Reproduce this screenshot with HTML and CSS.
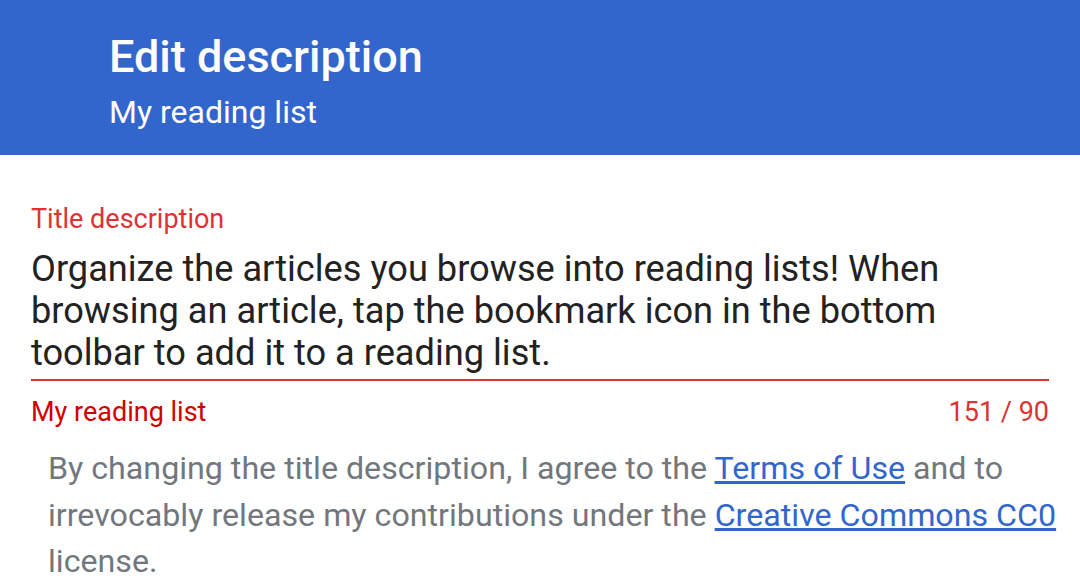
FILE: index.html
```html
<!DOCTYPE html>
<html>
<head>
<meta charset="utf-8">
<link rel="stylesheet" href="styles.css">
</head>
<body>
<header class="appbar">
  <h1 class="appbar-title">Edit description</h1>
  <div class="appbar-subtitle">My reading list</div>
</header>
<main class="content">
  <div class="field">
    <label class="field-label">Title description</label>
    <div class="field-input">Organize the articles you browse into reading lists! When browsing an article, tap the bookmark icon in the bottom toolbar to add it to a reading list.</div>
    <div class="field-helper">
      <span class="helper-error">My reading list</span>
      <span class="helper-count">151 / 90</span>
    </div>
  </div>
  <p class="legal">By changing the title description, I agree to the <a href="#">Terms of Use</a> and to irrevocably release my contributions under the <a href="#">Creative Commons CC0</a> license.</p>
</main>
</body>
</html>
```
FILE: styles.css
```css
html, body {
  margin: 0;
  padding: 0;
  background: #ffffff;
  font-family: Roboto, "Noto Sans", sans-serif;
}
.appbar {
  background: #3366cc;
  height: 155px;
  box-sizing: border-box;
  padding: 30px 0 0 109px;
  color: #ffffff;
}
.appbar-title {
  margin: 0;
  font-size: 45px;
  font-weight: 500;
  line-height: 54px;
}
.appbar-subtitle {
  font-size: 32px;
  line-height: 40px;
  margin-top: 8px;
}
.content {
  padding: 47px 31px 0;
}
.field-label {
  display: block;
  color: #d33;
  font-size: 27px;
  line-height: 34px;
}
.field-input {
  margin-top: 12px;
  color: #222222;
  font-size: 36.2px;
  line-height: 42px;
  padding-bottom: 5px;
  border-bottom: 2px solid #dd3333;
}
.field-helper {
  display: flex;
  justify-content: space-between;
  font-size: 27px;
  line-height: 34px;
  padding-top: 14px;
}
.helper-error { color: #d00000; }
.helper-count { color: #d33; }
.legal {
  margin: 16px -28px 0 17px;
  color: #72777d;
  font-size: 32.2px;
  line-height: 46.5px;
}
.legal a {
  color: #3366cc;
  text-decoration: underline;
}
```
